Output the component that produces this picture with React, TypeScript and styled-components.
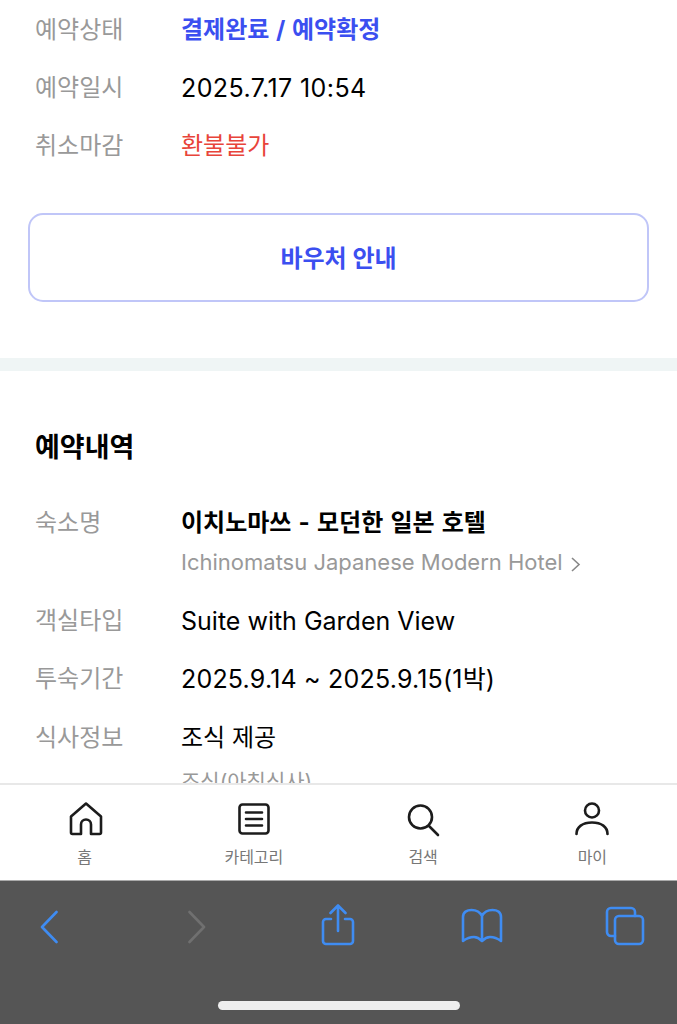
import React from "react";
import styled, { createGlobalStyle } from "styled-components";

const GlobalStyle = createGlobalStyle`
  html, body {
    margin: 0;
    padding: 0;
    background: #fff;
  }
  * {
    box-sizing: border-box;
  }
  body {
    font-family: Inter, "Noto Sans CJK KR", sans-serif;
  }
`;

const Screen = styled.div`
  width: 677px;
  height: 1024px;
  display: flex;
  flex-direction: column;
  overflow: hidden;
`;

const Content = styled.main`
  flex: 1;
  min-height: 0;
  overflow: hidden;
`;

const Section = styled.section`
  padding: 0 35px;
`;

const Row = styled.div`
  display: grid;
  grid-template-columns: 146px 1fr;
  padding: 15px 0 13px;
`;

const DetailRow = styled(Row)`
  padding-bottom: 13.5px;
`;

const Label = styled.div`
  font-size: 24px;
  line-height: 30px;
  color: #999;
`;

const Value = styled.div<{
  $tone?: "blue" | "red";
  $bold?: boolean;
  $latin?: boolean;
  $track?: number;
  $wordGap?: number;
}>`
  font-size: ${(props) => (props.$latin ? 25 : 24)}px;
  line-height: 30px;
  letter-spacing: ${(props) => props.$track ?? 0}px;
  word-spacing: ${(props) => props.$wordGap ?? 0}px;
  font-weight: ${(props) => (props.$bold || props.$tone === "blue" ? 700 : 400)};
  color: ${(props) =>
    props.$tone === "blue"
      ? "#3b4ff0"
      : props.$tone === "red"
        ? "#e8443a"
        : "#000"};
`;

const SubValue = styled.div<{ $gap: number; $size: number }>`
  display: flex;
  align-items: center;
  gap: 7px;
  margin-top: ${(props) => props.$gap}px;
  font-size: ${(props) => props.$size}px;
  line-height: 30px;
  color: #999;
`;

const VoucherButton = styled.button`
  display: block;
  width: 621px;
  height: 89px;
  margin: 39px 0 56px -7px;
  padding: 0 0 2px;
  background: #fff;
  border: 2px solid #c0c6f8;
  border-radius: 15px;
  font-family: inherit;
  font-size: 24px;
  font-weight: 700;
  color: #3b4ff0;
`;

const Band = styled.div`
  height: 13px;
  background: #eff5f5;
`;

const Heading = styled.h2`
  margin: 0;
  padding: 53px 0 21px;
  font-size: 27px;
  line-height: 48px;
  font-weight: 700;
  color: #000;
`;

const TabBar = styled.nav`
  height: 97px;
  flex: none;
  display: grid;
  grid-template-columns: repeat(4, 1fr);
  background: #fff;
  border-top: 2px solid #e8e8e8;
`;

const Tab = styled.div`
  display: flex;
  flex-direction: column;
  align-items: center;
  padding-top: 16px;
`;

const TabLabel = styled.span`
  margin-top: 9px;
  font-size: 16px;
  line-height: 22px;
  color: #777;
`;

const SafariBar = styled.div`
  position: relative;
  height: 144px;
  flex: none;
  display: flex;
  align-items: flex-start;
  background: #555;
  border-top: 1px solid #aaa;
`;

const HomeIndicator = styled.div`
  position: absolute;
  left: 218px;
  bottom: 14px;
  width: 242px;
  height: 9px;
  border-radius: 5px;
  background: #eee;
`;

const TabIcon = styled.svg`
  width: 36px;
  height: 36px;
  fill: none;
  stroke: #1c1c1c;
  stroke-width: 2.6;
  stroke-linecap: round;
  stroke-linejoin: round;
`;

const BarIcon = styled.svg<{ $muted?: boolean; $left: number; $top: number }>`
  display: block;
  flex: none;
  margin-left: ${(props) => props.$left}px;
  margin-top: ${(props) => props.$top}px;
  fill: none;
  stroke: ${(props) => (props.$muted ? "#707070" : "#3f8cf2")};
  stroke-width: 2.6;
  stroke-linecap: round;
  stroke-linejoin: round;
`;

const Chevron = styled.svg`
  width: 11px;
  height: 16px;
  margin-top: 4px;
  fill: none;
  stroke: #888;
  stroke-width: 1.6;
`;

export default function App() {
  return (
    <Screen>
      <GlobalStyle />
      <Content>
        <Section>
          <Row>
            <Label>예약상태</Label>
            <Value $tone="blue" $wordGap={1}>결제완료 / 예약확정</Value>
          </Row>
          <Row>
            <Label>예약일시</Label>
            <Value $latin $track={0.4}>2025.7.17 10:54</Value>
          </Row>
          <Row>
            <Label>취소마감</Label>
            <Value $tone="red">환불불가</Value>
          </Row>
          <VoucherButton>바우처 안내</VoucherButton>
        </Section>
        <Band />
        <Section>
          <Heading>예약내역</Heading>
          <DetailRow>
            <Label>숙소명</Label>
            <div>
              <Value $bold $wordGap={1.5}>이치노마쓰 - 모던한 일본 호텔</Value>
              <SubValue $gap={9} $size={22}>
                Ichinomatsu Japanese Modern Hotel
                <Chevron viewBox="0 0 11 16">
                  <path d="M2 2l7 6.5L2 15" />
                </Chevron>
              </SubValue>
            </div>
          </DetailRow>
          <DetailRow>
            <Label>객실타입</Label>
            <Value $latin>Suite with Garden View</Value>
          </DetailRow>
          <DetailRow>
            <Label>투숙기간</Label>
            <Value $latin $track={0.2}>2025.9.14 ~ 2025.9.15(1박)</Value>
          </DetailRow>
          <DetailRow>
            <Label>식사정보</Label>
            <div>
              <Value>조식 제공</Value>
              <SubValue $gap={14} $size={21}>조식(아침식사)</SubValue>
            </div>
          </DetailRow>
        </Section>
      </Content>
      <TabBar>
        <Tab>
          <TabIcon viewBox="0 0 36 36">
            <path d="M19 2.500L4 15.500V31.500a1.500 1.500 0 0 0 1.500 1.500H14V23.500a5 5 0 0 1 10 0V33h8.500a1.500 1.500 0 0 0 1.500-1.500V15.500z" />
          </TabIcon>
          <TabLabel>홈</TabLabel>
        </Tab>
        <Tab>
          <TabIcon viewBox="0 0 36 36">
            <rect x="3.500" y="3.500" width="29" height="29" rx="3" />
            <path d="M10 11.500h16M10 18h16M10 24.500h16" />
          </TabIcon>
          <TabLabel>카테고리</TabLabel>
        </Tab>
        <Tab>
          <TabIcon viewBox="0 0 36 36">
            <circle cx="15.500" cy="16" r="11.500" />
            <path d="M24 25l9 9" />
          </TabIcon>
          <TabLabel>검색</TabLabel>
        </Tab>
        <Tab>
          <TabIcon viewBox="0 0 36 36">
            <circle cx="18" cy="9.500" r="7" />
            <path d="M2.500 33c0-7 6-11.500 15.500-11.500S33.500 26 33.500 33" />
          </TabIcon>
          <TabLabel>마이</TabLabel>
        </Tab>
      </TabBar>
      <SafariBar>
        <BarIcon $left={40} $top={29} width="18" height="34" viewBox="0 0 18 34">
          <path d="M16.500 2L2 17l14.500 15" />
        </BarIcon>
        <BarIcon $muted $left={130} $top={29} width="18" height="34" viewBox="0 0 18 34">
          <path d="M1.500 2L16 17 1.500 32" />
        </BarIcon>
        <BarIcon $left={115} $top={23} width="34" height="42" viewBox="0 0 34 42">
          <path d="M10 15H5a3 3 0 0 0-3 3v19a3 3 0 0 0 3 3h24a3 3 0 0 0 3-3V18a3 3 0 0 0-3-3h-5M17 27V2M9.500 9L17 1.500 24.500 9" />
        </BarIcon>
        <BarIcon $left={106} $top={27} width="42" height="36" viewBox="0 0 42 36">
          <path d="M21 8C19 4 15 2 10.500 2 6 2 2 4 2 9V33C6 30 10 29 13 29c3 0 6 2 8 4 2-2 5-4 8-4 3 0 7 1 11 4V9c0-5-4-7-8.500-7C27 2 23 4 21 8zM21 8v25" />
        </BarIcon>
        <BarIcon $left={102} $top={25} width="40" height="40" viewBox="0 0 40 40">
          <path d="M10 30H6a4 4 0 0 1-4-4V6a4 4 0 0 1 4-4h20a4 4 0 0 1 4 4v4" />
          <rect x="10" y="10" width="28" height="28" rx="4" />
        </BarIcon>
        <HomeIndicator />
      </SafariBar>
    </Screen>
  );
}
